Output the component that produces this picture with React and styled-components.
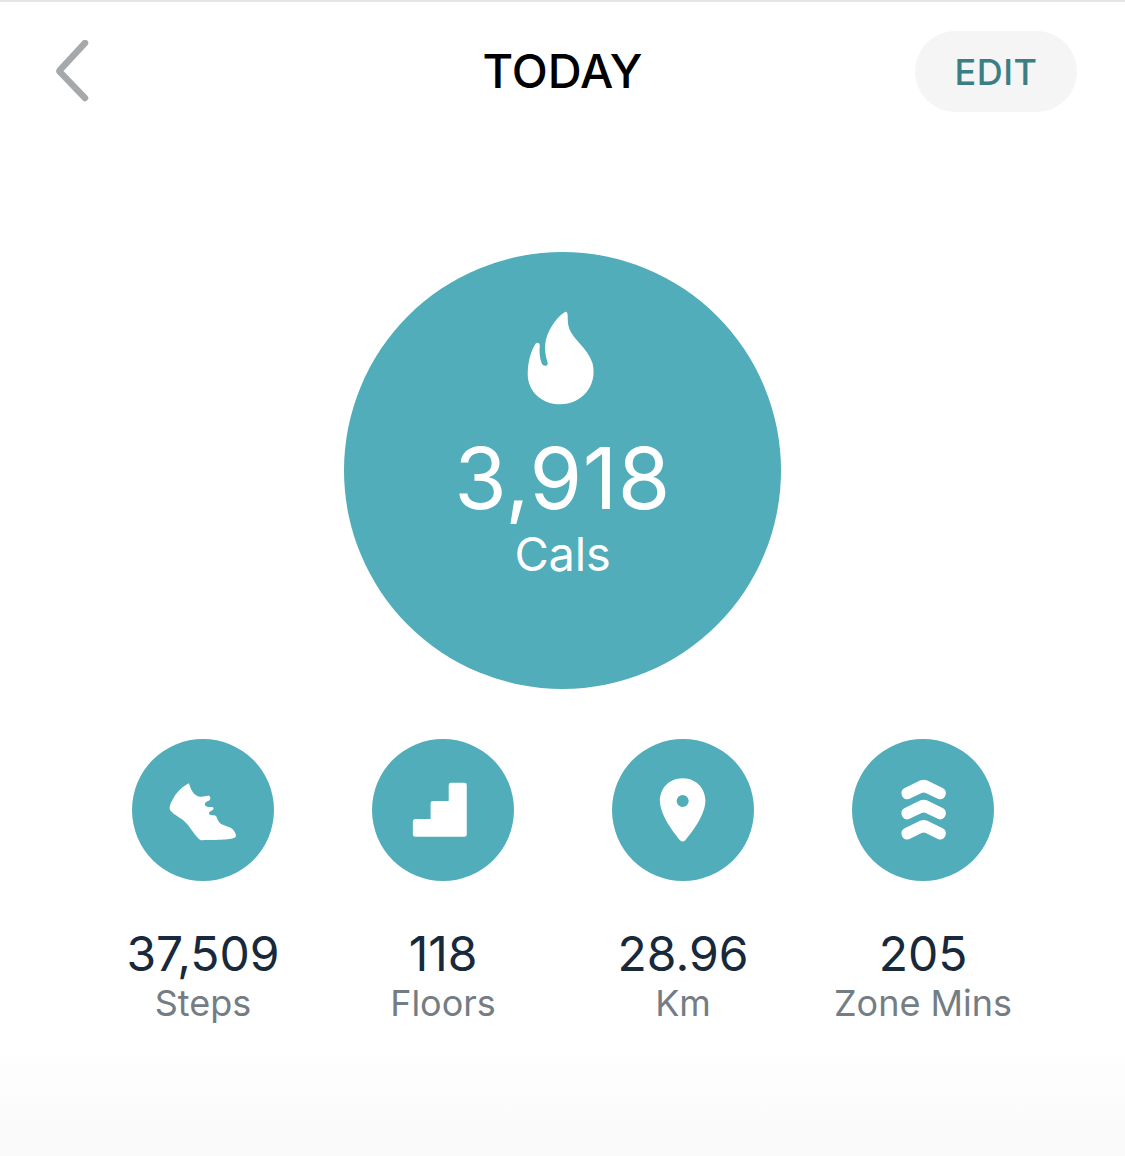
import styled, { createGlobalStyle } from "styled-components";

const GlobalStyle = createGlobalStyle`
    html, body {
        margin: 0;
        padding: 0;
        background: #fff;
    }
    body {
        font-family: Inter, "Liberation Sans", sans-serif;
        -webkit-font-smoothing: antialiased;
    }
`;

const Page = styled.div`
    width: 1125px;
    height: 1156px;
    overflow: hidden;
    border-top: 2px solid #e6e6e6;
    box-sizing: border-box;
    background: linear-gradient(#fff 0, #fff 1040px, #fafafa 1130px);
`;

const Header = styled.header`
    display: grid;
    grid-template-columns: 1fr auto 1fr;
    align-items: center;
    padding: 29px 48px 0;
`;

const BackIcon = styled.svg`
    display: block;
    width: 36px;
    height: 64px;
    margin-left: 7px;
    fill: none;
    stroke: #a5a9ac;
    stroke-width: 6.5;
    stroke-linecap: round;
    stroke-linejoin: round;
`;

const Title = styled.h1`
    margin: 0 0 2px;
    font-size: 47px;
    line-height: 79px;
    font-weight: 500;
    color: #000;
    letter-spacing: 0;
`;

const EditButton = styled.button`
    justify-self: end;
    width: 162px;
    height: 81px;
    border: 0;
    border-radius: 41px;
    background: #f5f5f5;
    color: #3b7f85;
    font-family: inherit;
    font-size: 36px;
    font-weight: 500;
    letter-spacing: 0.5px;
    padding: 0;
`;

const Hero = styled.section`
    width: 437px;
    height: 437px;
    margin: 140px auto 0;
    border-radius: 50%;
    background: #50adb9;
    color: #fff;
    display: flex;
    flex-direction: column;
    align-items: center;
    padding-top: 58px;
    box-sizing: border-box;
`;

const FlameIcon = styled.svg`
    display: block;
    width: 72px;
    height: 97px;
    fill: #fff;
`;

const HeroValue = styled.div`
    font-size: 85px;
    line-height: 92px;
    font-weight: 420;
    margin-top: 26px;
    letter-spacing: 0.4px;
`;

const HeroLabel = styled.div`
    font-size: 47px;
    line-height: 54px;
    margin-top: 2px;
    font-weight: 420;
    letter-spacing: -0.2px;
`;

const Stats = styled.section`
    display: grid;
    grid-template-columns: repeat(4, 240px);
    justify-content: center;
    margin-top: 50px;
    padding-left: 1px;
`;

const Stat = styled.div`
    display: flex;
    flex-direction: column;
    align-items: center;
`;

const StatBadge = styled.div`
    width: 142px;
    height: 142px;
    border-radius: 50%;
    background: #50adb9;
    svg {
        display: block;
        width: 142px;
        height: 142px;
    }
`;

const StatValue = styled.div`
    margin-top: 44px;
    font-size: 48px;
    line-height: 58px;
    font-weight: 420;
    color: #17293a;
    letter-spacing: 0;
    white-space: nowrap;
`;

const StatLabel = styled.div`
    font-size: 36px;
    line-height: 40px;
    font-weight: 420;
    color: #747c84;
    letter-spacing: 0;
    white-space: nowrap;
`;

const shoe = (
    <svg viewBox="38 28 424 424">
        <path fill="#fff" d="M208 160 C212 172 215 185 228 195 C240 204 254 200 266 197 C273 198 274 208 268 212 C262 215 254 218 256 226 C260 233 274 230 280 232 C284 237 280 241 274 243 C268 245 266 250 270 254 C278 256 285 254 289 258 C293 266 295 276 304 282 C316 288 330 290 338 297 C345 304 350 314 348 320 C340 328 310 330 245 330 C238 329 233 322 222 308 C210 292 203 280 190 270 C178 261 160 252 152 241 C148 234 152 222 160 208 C170 188 190 168 208 160 Z" />
    </svg>
);

const stairs = (
    <svg viewBox="758 28 424 424">
        <path fill="#fff" d="M880 275 Q880 267 888 267 H933 V220 Q933 213 940 213 H987 V166 Q987 159 994 159 H1034 Q1041 159 1041 166 V313 Q1041 320 1034 320 H887 Q880 320 880 313 Z" />
    </svg>
);

const pin = (
    <svg viewBox="38 28 424 424">
        <path
            fill="#fff"
            fillRule="evenodd"
            d="M249 145 C292 145 317 178 317 212 C317 255 275 310 257 330 C252 335 246 335 241 330 C223 310 181 255 181 212 C181 178 206 145 249 145 Z M249 195 A18 18 0 1 0 249 231 A18 18 0 1 0 249 195 Z"
        />
    </svg>
);

const zone = (
    <svg viewBox="758 28 424 424">
        <g fill="#fff">
            <path d="M961 152 Q972 147 983 152 L1030 175 C1047 184 1036 214 1016 207 L978 189 Q972 186 966 189 L928 207 C908 214 897 184 914 175 Z" />
            <path d="M961 212 Q972 207 983 212 L1030 235 C1047 244 1036 274 1016 267 L978 249 Q972 246 966 249 L928 267 C908 274 897 244 914 235 Z" />
            <path d="M961 272 Q972 267 983 272 L1030 295 C1047 304 1036 334 1016 327 L978 309 Q972 306 966 309 L928 327 C908 334 897 304 914 295 Z" />
        </g>
    </svg>
);

const stats = [
    { value: "37,509", label: "Steps", icon: shoe },
    { value: "118", label: "Floors", icon: stairs },
    { value: "28.96", label: "Km", icon: pin },
    { value: "205", label: "Zone Mins", icon: zone },
];

export default function App() {
    return (
        <Page>
            <GlobalStyle />
            <Header>
                <BackIcon viewBox="0 0 36 64">
                    <path d="M30 3 L5 30 Q4 31 5 32 L30 58" />
                </BackIcon>
                <Title>TODAY</Title>
                <EditButton>EDIT</EditButton>
            </Header>
            <Hero>
                <FlameIcon viewBox="260 60 215 290">
                    <path d="M378 66 C384 70 380 90 384 108 C392 146 440 170 456 220 C472 290 420 342 360 342 C300 342 262 300 262 252 C262 215 272 180 286 160 C292 155 298 158 298 166 C296 185 298 205 304 220 C308 228 320 230 322 220 C318 205 312 185 314 165 C318 125 345 85 372 67 C374 65 376 65 378 66 Z" />
                </FlameIcon>
                <HeroValue>3,918</HeroValue>
                <HeroLabel>Cals</HeroLabel>
            </Hero>
            <Stats>
                {stats.map((s) => (
                    <Stat key={s.label}>
                        <StatBadge>{s.icon}</StatBadge>
                        <StatValue>{s.value}</StatValue>
                        <StatLabel>{s.label}</StatLabel>
                    </Stat>
                ))}
            </Stats>
        </Page>
    );
}
